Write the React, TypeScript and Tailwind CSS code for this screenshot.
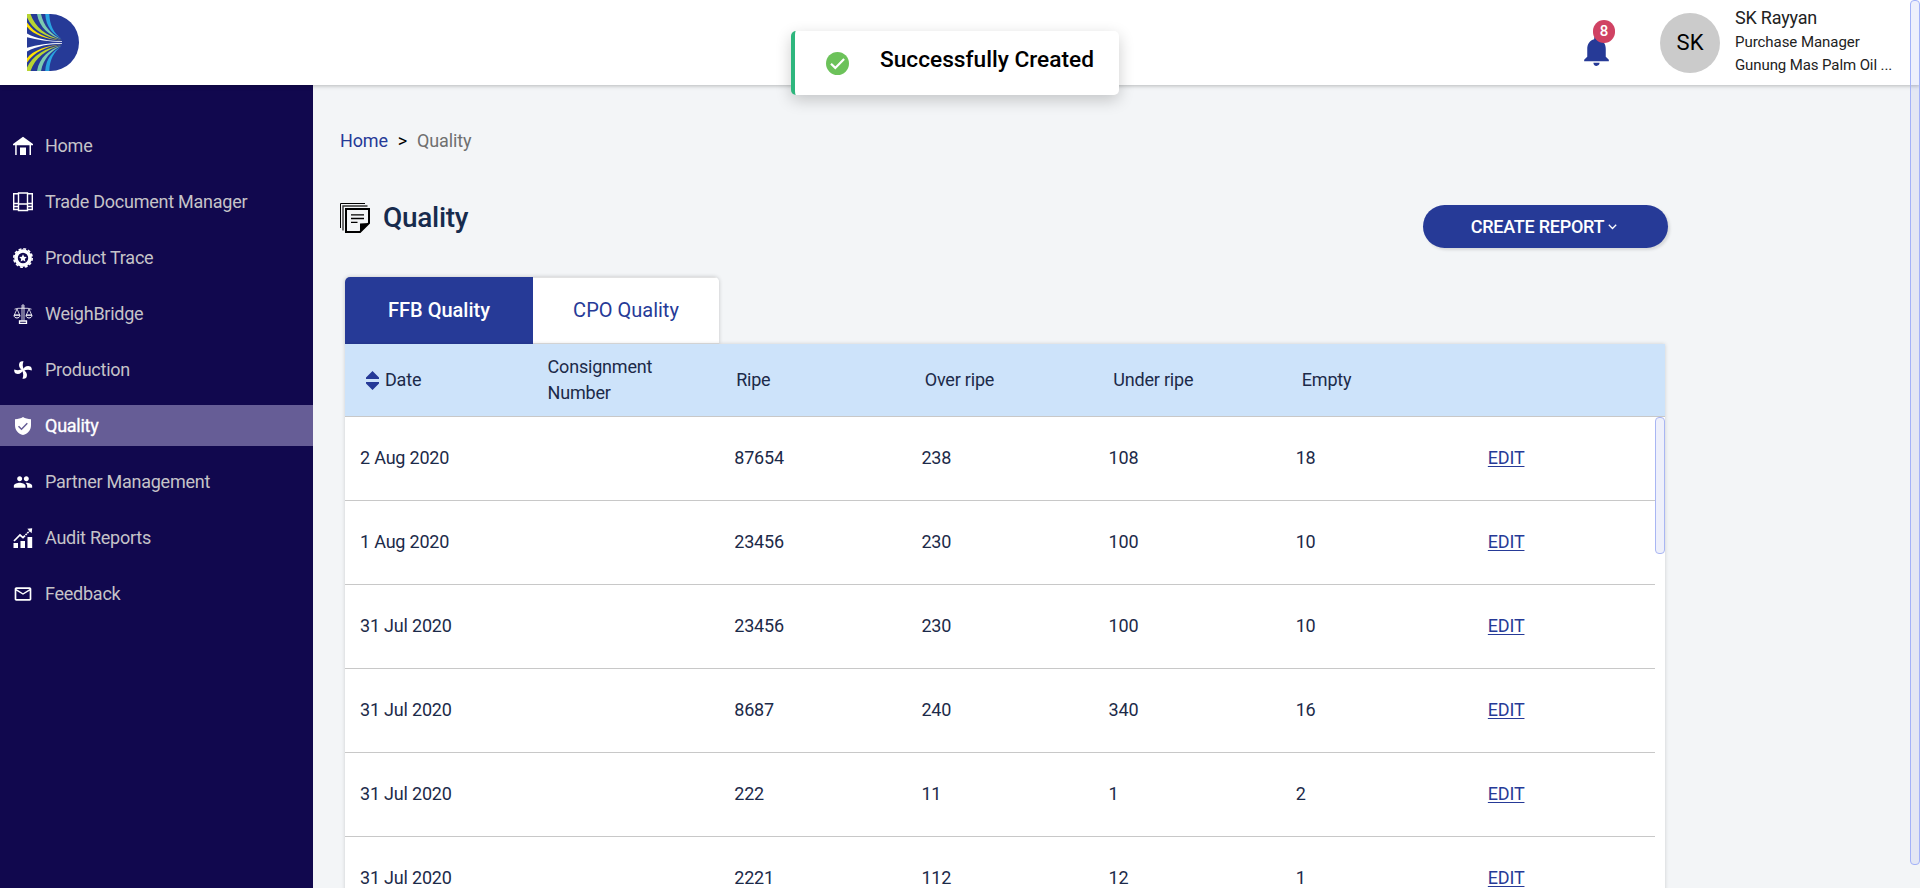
import type { ReactNode } from "react";
import { MdMailOutline, MdNotifications, MdPeople } from "react-icons/md";

function Logo() {
  const half = (
    <>
      <path fill="#29a3e0" d="M18.200 0H22.300C22.600 11 27 19.500 34 24.300C26 20 19 13 18.200 0Z" />
      <path fill="#7ccbb0" d="M10 0H14C16.500 12 24 20.500 34.500 25.200C22.500 21.500 12.500 14 10 0Z" />
      <path fill="#b8d432" d="M0 0H3.500C8 13 19 22 35 26.100C19 23.400 5.500 16 0 3.500Z" />
      <path fill="#ffe100" d="M0 8.500C7.500 19.500 19 24.300 35 26.800C19 25.200 6.500 21 0 12.800Z" />
      <path fill="#ffffff" d="M0 19.500C10 25 22 27 35 27.200V27.900C22 27.900 10 26 0 23.300Z" />
    </>
  );
  return (
    <svg className="h-[57px] w-[53px]" viewBox="0 0 53 57">
      <path fill="#263a97" d="M0 0H23.500A28.500 28.500 0 0 1 23.500 57H0Z" />
      {half}
      <g transform="matrix(1 0 0 -1 0 57)">{half}</g>
    </svg>
  );
}

function HomeIcon() {
  return (
    <svg className="h-5 w-5" viewBox="0 0 20 20" fill="#fff">
      <path d="M10 .8 20 8v1.200H18V19H16.500V9.200H3.700V19H2.200V9.200H0V8Z" />
      <path d="M7 11.500h6V19H7Z" />
    </svg>
  );
}

function BindersIcon() {
  return (
    <svg className="h-5 w-5" viewBox="0 0 20 20" fill="none" stroke="#fff" strokeWidth="1.400">
      <path d="M.7 1.700H5.500V17.500H.7ZM14.500 1.700H19.300V17.500H14.500ZM5.500 1H14.500V18.500H5.500Z" />
      <path d="M.7 11.500H5.500M.7 14.500H5.500M14.500 11.500H19.300M14.500 14.500H19.300M5.500 12H14.500" />
    </svg>
  );
}

function BadgeIcon() {
  return (
    <svg className="h-5 w-5" viewBox="0 0 20 20">
      <circle cx="10" cy="10" r="7" fill="none" stroke="#fff" strokeWidth="3.600" />
      <circle cx="10" cy="10" r="9.200" fill="none" stroke="#fff" strokeWidth="1.600" strokeDasharray="2.900 1.917" />
      <path fill="#fff" d="m10 6.300 1.150 2.450 2.650.35-1.950 1.850.5 2.650L10 12.300l-2.350 1.300.5-2.650L6.200 9.100l2.650-.35Z" />
    </svg>
  );
}

function ScaleIcon() {
  return (
    <svg className="h-5 w-5" viewBox="0 0 20 20" fill="none" stroke="#fff" strokeWidth="1">
      <path d="M9 1h2v2H9ZM1.500 5.200 5 4.300H15L18.500 5.200" strokeWidth=".8" />
      <path d="M4 5 1.300 11H6.700ZM16 5l-2.700 6h5.400Z" strokeWidth=".8" />
      <path d="M1 11.200c0 3.700 6 3.700 6 0ZM13 11.200c0 3.700 6 3.700 6 0Z" />
      <path d="M8.800 3V16.500M10 3V16.500M11.200 3V16.500" strokeWidth=".6" />
      <path d="M6.500 17h7v2.500h-7Z" strokeWidth="1.300" />
    </svg>
  );
}

function FanIcon() {
  const blade = "M10.200 10.300C6.500 9 5 5.200 6.800 2.200C7.800 1.200 9.800 1 10.500 1.300C9.300 4.200 9.600 7 10.900 9.200Z";
  return (
    <svg className="h-5 w-5" viewBox="0 0 20 20" fill="#fff">
      <path d={blade} />
      <path d={blade} transform="rotate(90 10 10)" />
      <path d={blade} transform="rotate(180 10 10)" />
      <path d={blade} transform="rotate(270 10 10)" />
    </svg>
  );
}

function ShieldIcon() {
  return (
    <svg className="h-5 w-5" viewBox="0 0 20 20">
      <path fill="#fff" d="M10 1c2.200 1.300 4.800 2.100 8 2.300V9c0 5.500-3.200 8.700-8 10-4.800-1.300-8-4.500-8-10V3.300C5.200 3.100 7.800 2.300 10 1Z" />
      <path fill="none" stroke="#665d96" strokeWidth="1.500" d="m5.500 10.300 3 2.900 5.800-5.900" />
    </svg>
  );
}

function ReportIcon() {
  return (
    <svg className="h-5 w-5" viewBox="0 0 20 20" fill="#fff">
      <path d="M.5 15h4.500v5H.5ZM7.500 13h4.500v7H7.500ZM14.500 9h4.700v11h-4.700Z" />
      <path d="M1 13 7 7l3 2.700 2-2" fill="none" stroke="#fff" strokeWidth="1.700" />
      <path d="m12.500 7 4-4" fill="none" stroke="#fff" strokeWidth="1.600" strokeDasharray="1.800 .7" />
      <path d="M14.300.8 19.200.3 18.600 5.200Z" />
    </svg>
  );
}

function NotesIcon() {
  return (
    <svg className="h-[30px] w-[30px]" viewBox="0 0 30 30" fill="none" stroke="#000">
      <path d="M.5 25V.5H25" strokeWidth="1" />
      <path d="M3 27.500V3H27.500" strokeWidth="1.400" stroke="#333" />
      <path d="M6 6H29V20L20 29H6Z" strokeWidth="2" />
      <path d="M29 20 20 29V20.500Z" fill="#000" stroke="none" />
      <path d="M11 11.800H24M11 15.500H24M11 19.300H17.500" strokeWidth="1.300" />
    </svg>
  );
}

function NavItem({ icon, label, active = false }: { icon: ReactNode; label: string; active?: boolean }) {
  return (
    <a
      className={
        active
          ? "flex h-[41px] items-center gap-3 bg-[#665d96] pl-[13px] text-lg tracking-[-0.25px] text-white [-webkit-text-stroke:0.3px_white]"
          : "flex h-[41px] items-center gap-3 pl-[13px] text-lg tracking-[-0.25px] text-[#c5c3c8]"
      }
    >
      <span className="flex h-5 w-5 items-center justify-center text-white">{icon}</span>
      <span>{label}</span>
    </a>
  );
}

const navItems = [
  { label: "Home", icon: <HomeIcon /> },
  { label: "Trade Document Manager", icon: <BindersIcon /> },
  { label: "Product Trace", icon: <BadgeIcon /> },
  { label: "WeighBridge", icon: <ScaleIcon /> },
  { label: "Production", icon: <FanIcon /> },
  { label: "Quality", icon: <ShieldIcon />, active: true },
  { label: "Partner Management", icon: <MdPeople size={20} /> },
  { label: "Audit Reports", icon: <ReportIcon /> },
  { label: "Feedback", icon: <MdMailOutline size={20} /> },
];

const rows = [
  ["2 Aug 2020", "", "87654", "238", "108", "18"],
  ["1 Aug 2020", "", "23456", "230", "100", "10"],
  ["31 Jul 2020", "", "23456", "230", "100", "10"],
  ["31 Jul 2020", "", "8687", "240", "340", "16"],
  ["31 Jul 2020", "", "222", "11", "1", "2"],
  ["31 Jul 2020", "", "2221", "112", "12", "1"],
];

function Header() {
  return (
    <header className="z-10 flex h-[85px] shrink-0 items-start bg-white pl-[27px] shadow-[0_1px_4px_rgba(0,0,0,0.25)]">
      <div className="pt-[14px]">
        <Logo />
      </div>
      <div className="relative mt-8 ml-auto mr-[45px] h-[37px] w-[37px] text-[#263a97]">
        <MdNotifications size={37} />
        <span className="absolute -top-3 left-[15px] flex h-[23px] w-[22px] items-center justify-center rounded-full bg-[#d04263] text-[15px] font-medium text-white">
          8
        </span>
      </div>
      <div className="mt-[13px] flex h-[60px] w-[60px] items-center justify-center rounded-full bg-[#cbcbcb] pb-px text-[22px] text-black">
        SK
      </div>
      <div className="ml-[15px] w-[185px] pt-[6px] text-[#222]">
        <div className="text-lg leading-6 tracking-[-0.2px]">SK Rayyan</div>
        <div className="mt-px text-[15px] leading-[23px] tracking-[-0.05px]">Purchase Manager</div>
        <div className="text-[15px] leading-[23px] tracking-[-0.1px]">Gunung Mas Palm Oil ...</div>
      </div>
    </header>
  );
}

function QualityTable() {
  return (
    <section className="ml-[5px] w-[1320px]">
      <div className="flex h-[67px] w-[374px] overflow-hidden rounded-t-[5px] text-xl shadow-[0_0_4px_rgba(0,0,0,0.2)]">
        <button className="w-[188px] bg-[#263a97] pb-[2px] font-medium text-white">FFB Quality</button>
        <button className="w-[186px] border-t border-b border-[#e2e2e2] bg-white pb-[2px] text-[#263a97]">
          CPO Quality
        </button>
      </div>
      <div className="relative bg-white text-lg tracking-[-0.2px] text-[#1c2a49] shadow-[0_0_4px_rgba(0,0,0,0.16)]">
        <div className="grid h-[73px] grid-cols-7 items-center border-b border-[#c8c8c8] bg-[#cde3fa] leading-[26px]">
          <div className="flex items-center gap-[6px] pl-[21px]">
            <svg className="h-[19px] w-[13px]" viewBox="0 0 13 19" fill="#263a97">
              <path d="M6.500 0 13 6.500V8H0V6.500ZM0 11H13V12.500L6.500 19 0 12.500Z" />
            </svg>
            <span>Date</span>
          </div>
          <div className="w-[130px] pl-[14px]">Consignment Number</div>
          <div className="pl-[14px]">Ripe</div>
          <div className="pl-[14px]">Over ripe</div>
          <div className="pl-[14px]">Under ripe</div>
          <div className="pl-[14px]">Empty</div>
          <div />
        </div>
        <div className="flex">
          <div className="w-[1310px]">
            {rows.map((row, i) => (
              <div key={i} className="grid h-[84px] grid-cols-7 items-center border-b border-[#c8c8c8] pb-[2px]">
                {row.map((cell, j) => (
                  <div key={j} className="pl-[15px]">
                    {cell}
                  </div>
                ))}
                <a className="pl-5 text-[#263a97] underline underline-offset-2">EDIT</a>
              </div>
            ))}
          </div>
          <div className="h-[137px] w-[10px] rounded-[4px] border border-[#a9b6f3] bg-[#eef0fb]" />
        </div>
      </div>
    </section>
  );
}

export default function App() {
  return (
    <div className="relative flex h-[888px] w-full flex-col overflow-hidden bg-[#f3f5f7] font-[Roboto,sans-serif]">
      <Header />
      <div className="flex min-h-0 flex-1">
        <nav className="flex w-[313px] shrink-0 flex-col gap-[15px] bg-[#11084e] pt-10">
          {navItems.map((item) => (
            <NavItem key={item.label} {...item} />
          ))}
        </nav>
        <main className="min-w-0 flex-1 pt-[44px] pl-[27px]">
          <div className="flex h-6 items-center gap-[10px] text-lg tracking-[-0.15px]">
            <a className="text-[#263a97]">Home</a>
            <span className="text-black">&gt;</span>
            <span className="text-[#6f6f6f]">Quality</span>
          </div>
          <div className="mt-[42px] flex h-[82px] w-[1328px] items-start justify-between">
            <div className="flex h-[44px] items-center gap-[13px]">
              <div className="pt-[2px]">
                <NotesIcon />
              </div>
              <h1 className="pt-[2px] text-[28px] font-medium tracking-[-0.3px] text-[#172b4d]">Quality</h1>
            </div>
            <button className="mt-[10px] flex h-[43px] w-[245px] items-center justify-center gap-1 rounded-full bg-[#263a97] pr-[3px] text-lg font-medium tracking-[-0.25px] text-white shadow-[2px_2px_3px_rgba(0,0,0,0.12)]">
              CREATE REPORT
              <svg className="h-[6px] w-[9px]" viewBox="0 0 9 6" fill="none" stroke="#fff" strokeWidth="1.300">
                <path d="m.8.8 3.700 3.700L8.200.8" />
              </svg>
            </button>
          </div>
          <QualityTable />
        </main>
      </div>
      <div className="absolute top-[31px] left-[791px] z-20 flex h-16 w-[328px] rounded-[5px] border-l-[4px] border-[#2eb67d] bg-white pl-[31px] shadow-[0_5px_16px_rgba(0,0,0,0.2)]">
        <svg className="mt-[21px] h-[23px] w-[23px]" viewBox="0 0 23 23">
          <circle cx="11.500" cy="11.500" r="11.500" fill="#6cc25a" />
          <path d="m5 11.700 4.300 4.200 8.800-8.900" fill="none" stroke="#fff" strokeWidth="2.200" />
        </svg>
        <div className="mt-[13px] ml-[31px] text-[22.7px] leading-8 font-medium whitespace-nowrap text-black">
          Successfully Created
        </div>
      </div>
      <div className="absolute top-0 right-0 z-30 h-[865px] w-[10px] rounded-[4px] border border-[#a3b2f8] bg-[#5a6ee0]/10" />
    </div>
  );
}
